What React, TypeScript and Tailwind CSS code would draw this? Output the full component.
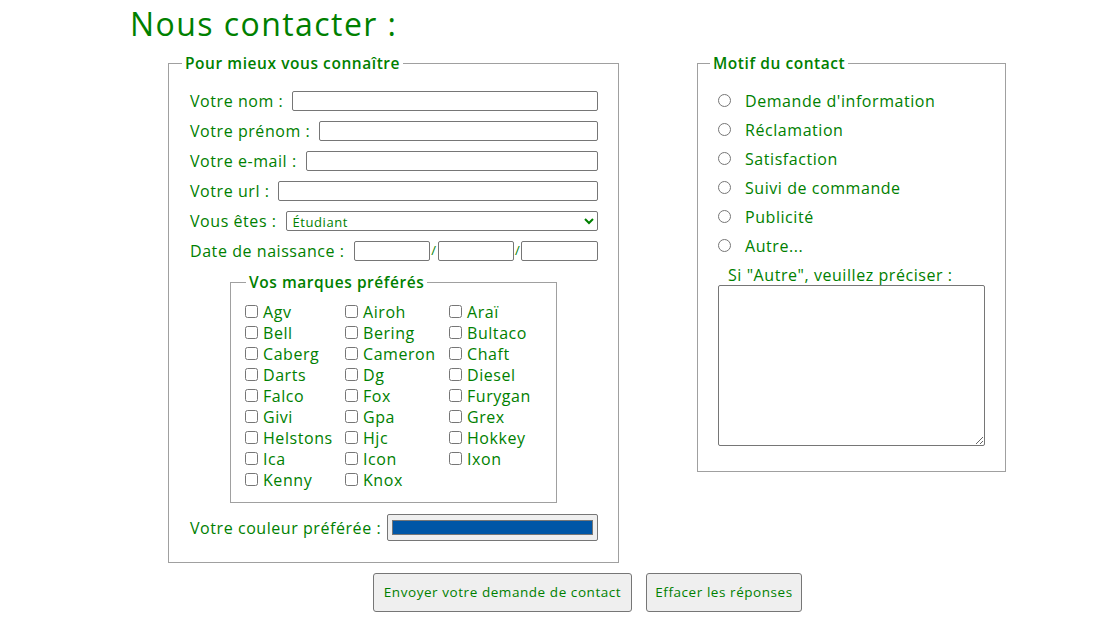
import React from "react";

const brands = [
  "Agv", "Airoh", "Araï",
  "Bell", "Bering", "Bultaco",
  "Caberg", "Cameron", "Chaft",
  "Darts", "Dg", "Diesel",
  "Falco", "Fox", "Furygan",
  "Givi", "Gpa", "Grex",
  "Helstons", "Hjc", "Hokkey",
  "Ica", "Icon", "Ixon",
  "Kenny", "Knox",
];

const motifs = [
  "Demande d'information",
  "Réclamation",
  "Satisfaction",
  "Suivi de commande",
  "Publicité",
  "Autre...",
];

const font = { fontFamily: '"Open Sans", "DejaVu Sans", sans-serif' };

const inputCls = "h-[20px] w-0 min-w-0 border border-[#767676] rounded-[2px] bg-white px-1 text-[13px] outline-none";

const Row = ({ label, children }: { label: string; children: React.ReactNode }) => (
  <div className="flex items-center h-[30px]">
    <label className="whitespace-nowrap mr-[9px]">{label}</label>
    {children}
  </div>
);

export default function App() {
  return (
    <div className="min-h-screen bg-white text-[#008000] text-[16px] tracking-[0.035em]" style={font}>
      {/* Titre */}
      <h1 className="pl-[130px] pt-[1px] text-[32px] leading-[46px] font-medium tracking-[0.045em]">
        Nous contacter :
      </h1>

      <form className="flex items-start pl-[168px] gap-[78px] mt-[6px]">
        {/* ================= Bloc gauche ================= */}
        <fieldset className="w-[451px] min-w-0 shrink-0 border border-[#a0a0a0] pl-[21px] pr-[20px] pb-[21px]">
          <legend className="ml-[-8px] px-[3px] text-[15.5px] font-semibold leading-[20px]">
            Pour mieux vous connaître
          </legend>

          <div className="pt-[13px]">
            <Row label="Votre nom :">
              <input type="text" className={`${inputCls} flex-1`} />
            </Row>
            <Row label="Votre prénom :">
              <input type="text" className={`${inputCls} flex-1`} />
            </Row>
            <Row label="Votre e-mail :">
              <input type="email" className={`${inputCls} flex-1`} />
            </Row>
            <Row label="Votre url :">
              <input type="url" className={`${inputCls} flex-1`} />
            </Row>
            <Row label="Vous êtes :">
              <select
                defaultValue="etudiant"
                className="flex-1 w-0 min-w-0 h-[20px] border border-[#767676] rounded-[2px] bg-white text-[13px] pl-[2px] text-[#008000] outline-none"
              >
                <option value="etudiant">Étudiant</option>
                <option value="salarie">Salarié</option>
                <option value="autre">Autre</option>
              </select>
            </Row>
            <Row label="Date de naissance :">
              <div className="flex-1 w-0 min-w-0 flex items-center">
                <input type="text" className={`${inputCls} flex-1`} />
                <span className="text-[13px] mx-[1px]">/</span>
                <input type="text" className={`${inputCls} flex-1`} />
                <span className="text-[13px] mx-[1px]">/</span>
                <input type="text" className={`${inputCls} flex-1`} />
              </div>
            </Row>
          </div>

          {/* Marques */}
          <fieldset className="ml-[40px] mt-[6px] w-[327px] min-w-0 border border-[#a0a0a0] pl-[10px] pb-[12px]">
            <legend className="ml-[5px] px-[3px] text-[15.5px] font-semibold leading-[20px]">
              Vos marques préférés
            </legend>
            <div className="grid grid-cols-[100px_104px_auto] pt-[9px]">
              {brands.map((b) => (
                <label key={b} className="flex items-center h-[21px] whitespace-nowrap">
                  <input type="checkbox" className="w-[13px] h-[13px] ml-[4px] mr-[5px]" />
                  {b}
                </label>
              ))}
            </div>
          </fieldset>

          <div className="flex items-center mt-[11px]">
            <label className="whitespace-nowrap mr-[6px]">Votre couleur préférée :</label>
            <input
              type="color"
              defaultValue="#0056a6"
              className="flex-1 w-0 min-w-0 h-[27px] border border-[#767676] rounded-[2px] bg-[#efefef] px-[2px] py-[1px]"
            />
          </div>
        </fieldset>

        {/* ================= Bloc droit ================= */}
        <fieldset className="w-[309px] min-w-0 shrink-0 border border-[#a0a0a0] pl-[20px] pr-[20px] pb-[25px]">
          <legend className="ml-[-8px] px-[3px] text-[15.5px] font-semibold leading-[20px]">
            Motif du contact
          </legend>
          <div className="pt-[13px]">
            {motifs.map((m) => (
              <label key={m} className="flex items-center h-[29px]">
                <input type="radio" name="motif" className="w-[13px] h-[13px] mr-[14px]" />
                {m}
              </label>
            ))}
          </div>
          <div className="pl-[10px] h-[25px] pt-[4px] flex items-center">Si "Autre", veuillez préciser :</div>
          <textarea className="block w-[267px] h-[161px] border border-[#767676] rounded-[2px] outline-none" />
        </fieldset>
      </form>

      {/* Boutons */}
      <div className="flex pl-[373px] gap-[14px] mt-[10px]">
        <button
          type="submit"
          className="w-[259px] h-[39px] border border-[#767676] rounded-[3px] bg-[#efefef] text-[13.5px]"
        >
          Envoyer votre demande de contact
        </button>
        <button
          type="reset"
          className="w-[156px] h-[39px] border border-[#767676] rounded-[3px] bg-[#efefef] text-[13.5px]"
        >
          Effacer les réponses
        </button>
      </div>
    </div>
  );
}
